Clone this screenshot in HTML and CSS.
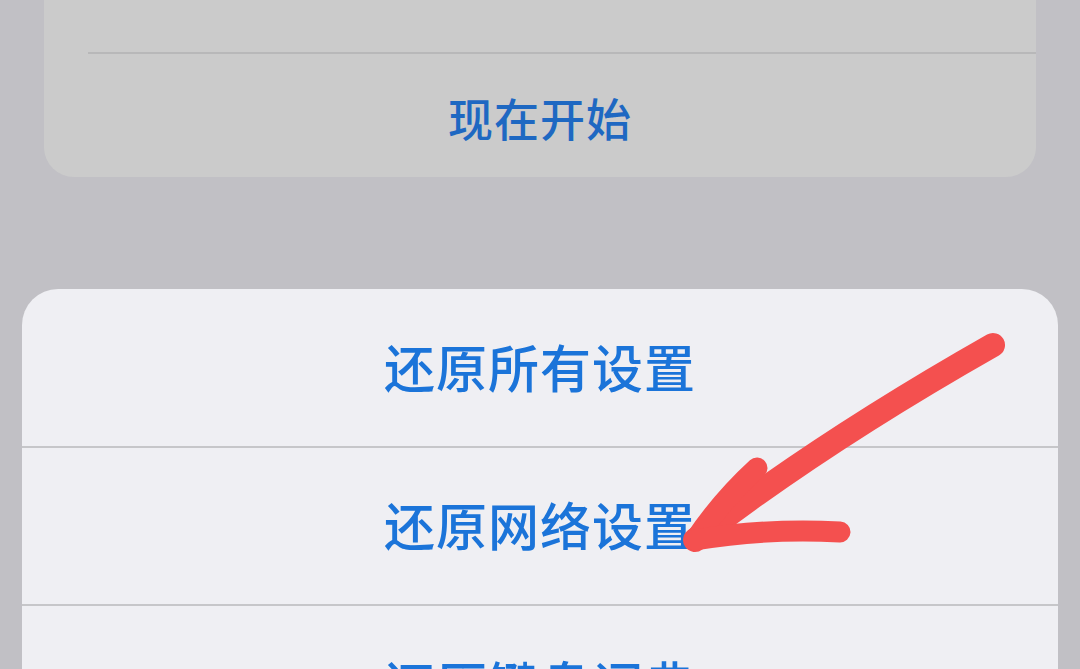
FILE: index.html
```html
<!DOCTYPE html>
<html lang="zh-CN">
<head>
    <meta charset="UTF-8">
    <meta name="viewport" content="width=device-width, initial-scale=1.0">
    <title>还原</title>
    <link rel="stylesheet" href="styles.css">
</head>
<body>
    <div class="back-card">
        <div class="back-row back-row-top"></div>
        <div class="back-row back-row-action">现在开始</div>
    </div>

    <div class="sheet">
        <div class="sheet-row">还原所有设置</div>
        <div class="sheet-row">还原网络设置</div>
        <div class="sheet-row">还原键盘词典</div>
    </div>

    <!-- hand-drawn marker pointing at the network reset row -->
    <svg class="marker" width="1080" height="669" viewBox="0 0 1080 669">
        <g fill="none" stroke="#f4504f" stroke-linecap="round" stroke-linejoin="round">
            <path d="M993 345 Q822 442 695 540" stroke-width="24"/>
            <path d="M757 468 Q722 500 695 540" stroke-width="21"/>
            <path d="M695 540 Q765 528 840 532" stroke-width="21"/>
        </g>
    </svg>
</body>
</html>
```

FILE: styles.css
```css
html, body {
    margin: 0;
    padding: 0;
}

body {
    width: 1080px;
    height: 669px;
    overflow: hidden;
    position: relative;
    background-color: #c1c0c5;
    font-family: "Noto Sans CJK SC", "Noto Sans", sans-serif;
}

.back-card {
    margin: -70px 44px 0 44px;
    background-color: #cbcbcb;
    border-radius: 30px;
    overflow: hidden;
}

.back-row-top {
    height: 122px;
    margin-left: 44px;
    border-bottom: 2px solid #b8b8b9;
}

.back-row-action {
    height: 123px;
    display: flex;
    align-items: center;
    justify-content: center;
    font-size: 45px;
    font-weight: 500;
    color: #1e68c2;
    letter-spacing: 1px;
    padding-top: 4px;
    box-sizing: border-box;
}

.sheet {
    margin: 112px 22px 0 22px;
    background-color: #efeff3;
    border-radius: 36px 36px 0 0;
    overflow: hidden;
}

.sheet-row {
    height: 158px;
    display: flex;
    align-items: center;
    justify-content: center;
    font-size: 51px;
    font-weight: 500;
    letter-spacing: 1px;
    color: #1b74d9;
    border-bottom: 2px solid #c6c6c9;
    padding-bottom: 4px;
    box-sizing: border-box;
}

.sheet-row:first-child {
    height: 159px;
}

.sheet-row:last-child {
    border-bottom: none;
}

.marker {
    position: absolute;
    left: 0;
    top: 0;
    pointer-events: none;
}
```
